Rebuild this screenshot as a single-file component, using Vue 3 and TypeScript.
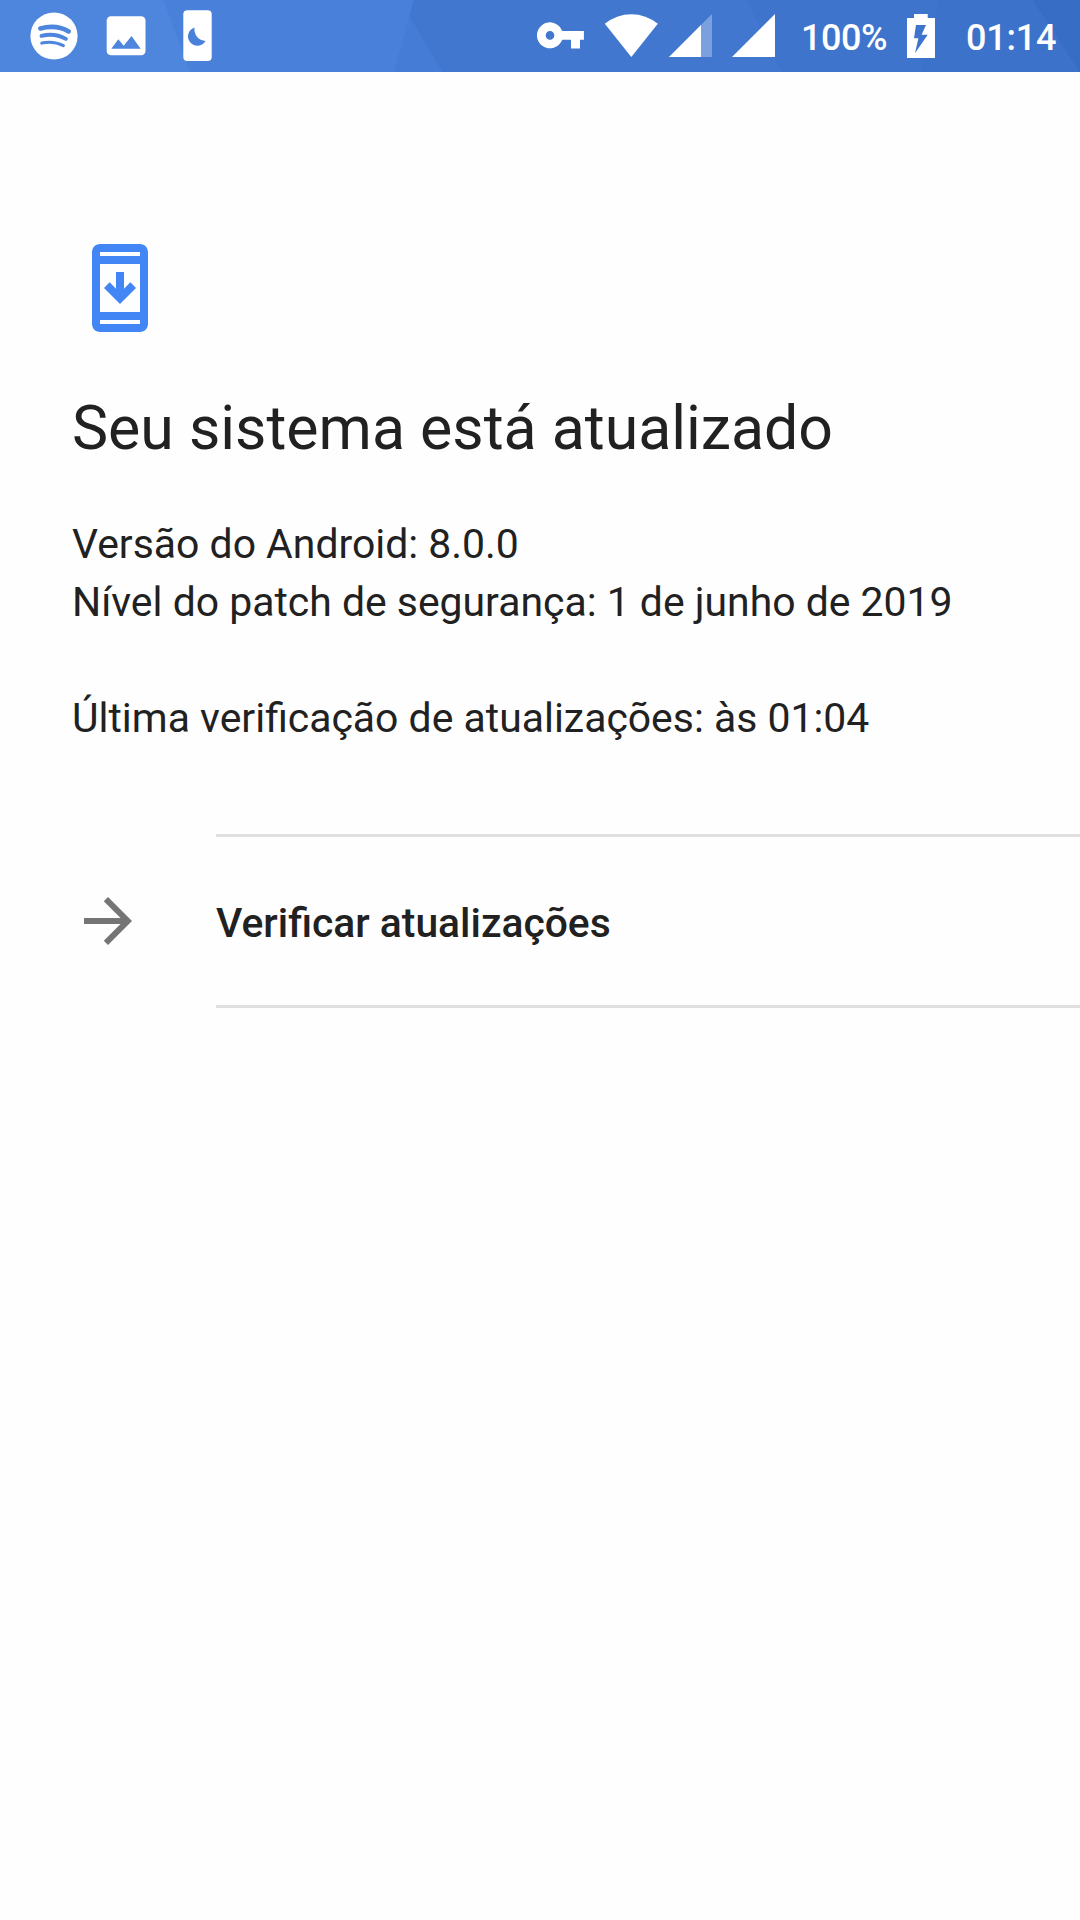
<script setup lang="ts">
const battery: string = '100%'
const clock: string = '01:14'
const details: string[] = [
  'Versão do Android: 8.0.0',
  'Nível do patch de segurança: 1 de junho de 2019',
  '',
  'Última verificação de atualizações: às 01:04',
]
</script>

<template>
  <div class="screen">
    <header class="status">
      <svg class="backdrop" viewBox="0 0 1080 72" aria-hidden="true">
        <rect width="1080" height="72" fill="#4e85dd" />
        <path d="M163.5 0H1080V72H190z" fill="#4980d9" />
        <path d="M414 0H1080V72H394z" fill="#457cd5" />
        <path d="M414 0H1080V72H442.500L409.500 16z" fill="#4177cf" />
        <path d="M747 0H1080V72H782z" fill="#3e74cc" />
        <path d="M938.500 0H1080V72H920.500z" fill="#3c72ca" />
        <path d="M1032.500 0H1080V72z" fill="#376dc5" />
      </svg>

      <div class="notifications">
        <svg width="48" height="72" viewBox="0 0 48 72">
          <circle cx="24" cy="36" r="23.6" fill="#fff" />
          <g fill="none" stroke="#4e85dd" stroke-linecap="round">
            <path d="M10.300 28.400Q26.500 24.300 38.700 31.400" stroke-width="4.600" />
            <path d="M11.500 35.900Q24.500 32.500 35.900 38.900" stroke-width="3.900" />
            <path d="M11.800 43.100Q23.500 40.500 33.400 45.600" stroke-width="3.100" />
          </g>
        </svg>
        <svg class="picture" width="40" height="72" viewBox="0 0 40 72">
          <rect x="0.700" y="16.300" width="38.800" height="39" rx="4.300" fill="#fff" />
          <path d="M5.300 48.800L12.300 39.200L17.700 45.700L25.500 36L34.700 48.800z" fill="#4e85dd" />
        </svg>
        <svg class="phone" width="29" height="72" viewBox="0 0 29 72">
          <rect x="0.300" y="10.200" width="28.400" height="50.800" rx="4" fill="#fff" />
          <path d="M11.600 27.400A9.400 9.400 0 1 0 22.600 41A11.500 11.500 0 0 1 11.600 27.400z" fill="#4980d9" />
        </svg>
      </div>

      <div class="system">
        <svg width="48" height="72" viewBox="0 0 48 72" fill="#fff">
          <path fill-rule="evenodd" d="M25.200 31H46.900V39.700H43V48.500H34V39.700H25.200A13 13 0 1 1 25.200 31zM13 31.100a4.300 4.300 0 1 0 0 8.600a4.300 4.300 0 1 0 0-8.600z" />
        </svg>
        <svg class="wifi" width="54" height="72" viewBox="0 0 54 72" fill="#fff">
          <path d="M0.800 23.700A42 42 0 0 1 53.800 23.700L27.300 56.900z" />
        </svg>
        <svg class="signal" width="43" height="72" viewBox="0 0 43 72" fill="#fff">
          <path d="M0 57L43 14V57z" opacity="0.300" />
          <path d="M0 57L32 25V57z" />
        </svg>
        <svg class="signal second" width="43" height="72" viewBox="0 0 43 72" fill="#fff">
          <path d="M0 57L43 14V57z" />
        </svg>
        <span class="percent">{{ battery }}</span>
        <svg width="28" height="72" viewBox="0 0 28 72" fill="#fff">
          <path fill-rule="evenodd" d="M7 14H20.700V18H28V58H0V18H7zM9 25L7 38.300H11.400L8 53.300L20.700 34.800H14.600L19 25z" />
        </svg>
        <span class="clock">{{ clock }}</span>
      </div>
    </header>

    <main>
      <svg class="update-icon" width="96" height="96" viewBox="0 0 24 24" fill="#4285f4">
        <path fill-rule="evenodd" d="M17 1H7C5.900 1 5 1.900 5 3V21C5 22.100 5.900 23 7 23H17C18.100 23 19 22.100 19 21V3C19 1.900 18.100 1 17 1zM7 3H17V4H7zM7 6H17V18H7zM7 20H17V21H7z" />
        <path d="M16 12L12 16L8 12L9.410 10.590L11 12.170V8H13V12.170L14.590 10.590z" />
      </svg>
      <h1>Seu sistema está atualizado</h1>
      <p v-for="(line, i) in details" :key="i">{{ line }}</p>
    </main>

    <section class="action">
      <svg width="72" height="72" viewBox="0 0 24 24" fill="#757575">
        <path d="M12 4L10.590 5.410L16.170 11H4V13H16.170L10.590 18.590L12 20L20 12z" />
      </svg>
      <div class="label">Verificar atualizações</div>
    </section>
  </div>
</template>

<style>
body {
  margin: 0;
  background: #fefefe;
}
</style>

<style scoped>
.screen {
  width: 1080px;
  height: 1920px;
  overflow: hidden;
  background: #fefefe;
  color: #212121;
  font-family: Roboto, "Noto Sans", sans-serif;
}

svg {
  display: block;
  flex: none;
}

.status {
  position: relative;
  display: flex;
  height: 72px;
  color: #fff;
}

.backdrop {
  position: absolute;
  inset: 0;
  width: 1080px;
  height: 72px;
}

.notifications,
.system {
  position: relative;
  display: flex;
}

.notifications {
  width: 507px;
  padding-left: 30px;
}

.picture {
  margin-left: 28px;
}

.phone {
  margin-left: 37px;
}

.wifi {
  margin-left: 19px;
}

.signal {
  margin-left: 11px;
}

.signal.second {
  margin-left: 20px;
}

.percent,
.clock {
  font-size: 36px;
  font-weight: 500;
  line-height: 77px;
  white-space: nowrap;
}

.percent {
  width: 106px;
  margin-left: 26px;
  letter-spacing: -0.5px;
}

.clock {
  margin-left: 31px;
  letter-spacing: -0.2px;
}

main {
  padding: 168px 72px 0;
}

h1 {
  margin: 57px 0 50px;
  font-size: 60.8px;
  font-weight: 400;
  line-height: 72px;
  white-space: nowrap;
}

p {
  height: 58px;
  margin: 0;
  font-size: 40.92px;
  line-height: 58px;
  white-space: nowrap;
}

.action {
  display: flex;
  align-items: center;
  margin-top: 87px;
  padding-left: 72px;
}

.label {
  flex: 1;
  height: 168px;
  margin-left: 72px;
  border-top: 3px solid #e0e0e0;
  border-bottom: 3px solid #e0e0e0;
  font-size: 40.8px;
  font-weight: 500;
  line-height: 172px;
}
</style>
